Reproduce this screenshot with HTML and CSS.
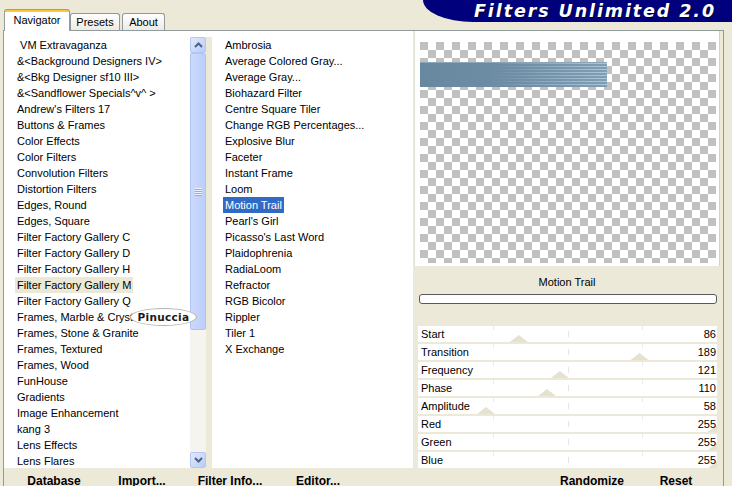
FILE: index.html
```html
<!DOCTYPE html>
<html>
<head>
<meta charset="utf-8">
<title>Filters Unlimited 2.0</title>
<link rel="stylesheet" href="styles.css">
</head>
<body>
<div class="window">
  <div class="header">
    <div class="tabs">
      <div class="tab active">Navigator</div>
      <div class="tab presets">Presets</div>
      <div class="tab about">About</div>
    </div>
    <div class="logo">Filters Unlimited 2.0</div>
  </div>
  <div class="panel">
    <div class="left">
      <div class="lists">
        <ul class="list list-cats">
          <li><span> VM Extravaganza</span></li>
          <li><span>&amp;&lt;Background Designers IV&gt;</span></li>
          <li><span>&amp;&lt;Bkg Designer sf10 III&gt;</span></li>
          <li><span>&amp;&lt;Sandflower Specials^v^ &gt;</span></li>
          <li><span>Andrew's Filters 17</span></li>
          <li><span>Buttons &amp; Frames</span></li>
          <li><span>Color Effects</span></li>
          <li><span>Color Filters</span></li>
          <li><span>Convolution Filters</span></li>
          <li><span>Distortion Filters</span></li>
          <li><span>Edges, Round</span></li>
          <li><span>Edges, Square</span></li>
          <li><span>Filter Factory Gallery C</span></li>
          <li><span>Filter Factory Gallery D</span></li>
          <li><span>Filter Factory Gallery H</span></li>
          <li class="sel-beige"><span>Filter Factory Gallery M</span></li>
          <li><span>Filter Factory Gallery Q</span></li>
          <li><span>Frames, Marble &amp; Crystal</span></li>
          <li><span>Frames, Stone &amp; Granite</span></li>
          <li><span>Frames, Textured</span></li>
          <li><span>Frames, Wood</span></li>
          <li><span>FunHouse</span></li>
          <li><span>Gradients</span></li>
          <li><span>Image Enhancement</span></li>
          <li><span>kang 3</span></li>
          <li><span>Lens Effects</span></li>
          <li><span>Lens Flares</span></li>
        </ul>
        <div class="scrollbar">
          <div class="sb-btn"><svg width="9" height="6" viewBox="0 0 9 6"><polyline points="1,5 4.5,1.5 8,5" fill="none" stroke="#4d6185" stroke-width="2"/></svg></div>
          <div class="sb-thumb"><span class="grip"></span></div>
          <div class="sb-track"></div>
          <div class="sb-btn"><svg width="9" height="6" viewBox="0 0 9 6"><polyline points="1,1 4.5,4.5 8,1" fill="none" stroke="#4d6185" stroke-width="2"/></svg></div>
        </div>
        <div class="sep"></div>
        <ul class="list list-filters">
          <li><span>Ambrosia</span></li>
          <li><span>Average Colored Gray...</span></li>
          <li><span>Average Gray...</span></li>
          <li><span>Biohazard Filter</span></li>
          <li><span>Centre Square Tiler</span></li>
          <li><span>Change RGB Percentages...</span></li>
          <li><span>Explosive Blur</span></li>
          <li><span>Faceter</span></li>
          <li><span>Instant Frame</span></li>
          <li><span>Loom</span></li>
          <li class="sel-blue"><span>Motion Trail</span></li>
          <li><span>Pearl's Girl</span></li>
          <li><span>Picasso's Last Word</span></li>
          <li><span>Plaidophrenia</span></li>
          <li><span>RadiaLoom</span></li>
          <li><span>Refractor</span></li>
          <li><span>RGB Bicolor</span></li>
          <li><span>Rippler</span></li>
          <li><span>Tiler 1</span></li>
          <li><span>X Exchange</span></li>
        </ul>
        <div class="badge">Pinuccia</div>
      </div>
      <div class="buttons">
        <div class="btn">Database</div>
        <div class="btn">Import...</div>
        <div class="btn">Filter Info...</div>
        <div class="btn">Editor...</div>
      </div>
    </div>
    <div class="right">
      <div class="preview">
        <div class="checker">
          <div class="trail"><div class="streaks"></div></div>
        </div>
      </div>
      <div class="title">Motion Trail</div>
      <div class="progress"></div>
      <div class="sliders">
        <div class="row"><span>Start</span><span>86</span><i class="thumb" style="left:100.8px"></i></div>
        <div class="row"><span>Transition</span><span>189</span><i class="thumb" style="left:221.6px"></i></div>
        <div class="row"><span>Frequency</span><span>121</span><i class="thumb" style="left:141.9px"></i></div>
        <div class="row"><span>Phase</span><span>110</span><i class="thumb" style="left:129px"></i></div>
        <div class="row"><span>Amplitude</span><span>58</span><i class="thumb" style="left:68px"></i></div>
        <div class="row"><span>Red</span><span>255</span><i class="thumb" style="left:299px"></i></div>
        <div class="row"><span>Green</span><span>255</span><i class="thumb" style="left:299px"></i></div>
        <div class="row"><span>Blue</span><span>255</span><i class="thumb" style="left:299px"></i></div>
      </div>
      <div class="rbtns">
        <div class="btn rbtn">Randomize</div>
        <div class="btn rbtn">Reset</div>
      </div>
    </div>
  </div>
</div>
</body>
</html>
```

FILE: styles.css
```css
html, body {
  margin: 0;
  padding: 0;
  background: #ece9d8;
}
body {
  font-family: "Liberation Sans", Arial, sans-serif;
  font-size: 11px;
  color: #000;
}
.window {
  width: 732px;
  height: 486px;
  overflow: hidden;
}

/* header */
.header {
  height: 30px;
  display: flex;
  align-items: flex-start;
}
.tabs {
  display: flex;
  align-items: flex-end;
  height: 30px;
  margin-left: 4px;
  position: relative;
  z-index: 2;
}
.tab {
  box-sizing: border-box;
  height: 17px;
  line-height: 16px;
  border: 1px solid #919b9c;
  border-bottom: none;
  border-radius: 3px 3px 0 0;
  background: linear-gradient(#ffffff, #ecebe5);
  text-align: center;
}
.tab.active {
  width: 66px;
  height: 22px;
  margin-bottom: -1px;
  line-height: 18px;
  padding-top: 1px;
  border-top-color: #e68b2c;
  background: linear-gradient(#ffc73c 0 2px, #ffffff 2px);
}
.tab.presets {
  width: 50px;
}
.tab.about {
  width: 43px;
  margin-left: 2px;
}
.logo {
  margin-left: auto;
  width: 309px;
  height: 22px;
  box-sizing: border-box;
  padding-right: 16px;
  background: #00007c;
  border-bottom-left-radius: 50px 22px;
  color: #fff;
  font-family: "DejaVu Sans", sans-serif;
  font-weight: bold;
  font-style: italic;
  font-size: 17.5px;
  letter-spacing: 1.9px;
  line-height: 22px;
  text-align: right;
  text-shadow: 1px 1px 0 #000030;
  white-space: nowrap;
}

/* panel */
.panel {
  margin-left: 3px;
  width: 721px;
  height: 456px;
  box-sizing: border-box;
  border: 1px solid #919b9c;
  border-bottom: none;
  background: #fff;
  display: flex;
}
.left {
  width: 409px;
  display: flex;
  flex-direction: column;
}
.lists {
  position: relative;
  height: 437px;
  box-sizing: border-box;
  padding: 6px 0 0 11px;
  display: flex;
}
.list {
  margin: 0;
  padding: 0;
  list-style: none;
  background: #fff;
}
.list li {
  height: 16px;
  line-height: 16px;
  white-space: pre;
}
.list li span {
  display: inline-block;
  padding: 0 2px;
}
.list-cats {
  width: 175px;
}
.list-filters {
  width: 190px;
  padding-left: 11px;
}
.sel-beige span {
  background: #ebe8d6;
}
.sel-blue span {
  background: #316ac5;
  color: #fff;
}

/* scrollbar */
.scrollbar {
  width: 16px;
  display: flex;
  flex-direction: column;
  background: #f5f4ef;
}
.sb-btn {
  height: 16px;
  box-sizing: border-box;
  border: 1px solid #b4c7f2;
  border-radius: 2px;
  background: linear-gradient(135deg, #e0e9fe, #b9cbf7);
  display: flex;
  align-items: center;
  justify-content: center;
}
.sb-thumb {
  height: 277px;
  box-sizing: border-box;
  border: 1px solid #afc3f2;
  border-radius: 2px;
  background: linear-gradient(to right, #cbd9fd, #bccffa);
  display: flex;
  align-items: center;
  justify-content: center;
}
.grip {
  width: 7px;
  height: 8px;
  background: repeating-linear-gradient(to bottom, #eef3fe 0 1px, #8eabea 1px 2px);
}
.sb-track {
  flex: 1;
}
.sep {
  width: 6px;
  background: #ece9d8;
}

.badge {
  position: absolute;
  left: 126px;
  top: 277px;
  width: 67px;
  height: 18px;
  box-sizing: border-box;
  border: 1px solid #b4b4b4;
  border-radius: 50%;
  background: #fff;
  font-family: "DejaVu Sans", sans-serif;
  font-weight: bold;
  font-size: 10.5px;
  letter-spacing: 0.3px;
  line-height: 16px;
  text-align: center;
  color: #1a1a1a;
}

/* bottom buttons */
.buttons {
  height: 18px;
  background: #ece9d8;
  display: flex;
  padding-left: 6px;
}
.btn {
  width: 88px;
  text-align: center;
  font-weight: bold;
  font-size: 12px;
  line-height: 14px;
  padding-top: 6px;
  white-space: nowrap;
}

/* right column */
.right {
  width: 310px;
  box-sizing: border-box;
  padding: 0 3px 0 1px;
  background: #ece9d8;
  display: flex;
  flex-direction: column;
}
.preview {
  background: #fff;
  padding: 11px 4px 3px 6px;
  border-left: 1px solid #e4e2d8;
  border-right: 1px solid #d6d3c6;
}
.checker {
  height: 221px;
  box-sizing: border-box;
  padding-top: 20px;
  margin-left: -1px;
  margin-right: -1px;
  background-image: conic-gradient(#fff 0 25%, #c0c0c0 0 50%, #fff 0 75%, #c0c0c0 0);
  background-size: 16px 16px;
}
.trail {
  width: 187px;
  height: 25px;
  background: linear-gradient(to right, #67889f, #6f8ea6 50%, #7f9db3);
  border-top: 1px solid #8aa6bb;
  box-sizing: border-box;
}
.streaks {
  height: 100%;
  background: repeating-linear-gradient(to bottom, rgba(190, 212, 228, 0.75) 0 1px, rgba(0, 0, 0, 0) 1px 3px);
  -webkit-mask-image: linear-gradient(to right, transparent 38%, #000 100%);
  mask-image: linear-gradient(to right, transparent 38%, #000 100%);
}
.title {
  text-align: center;
  padding-top: 9px;
  line-height: 14px;
}
.progress {
  margin: 5px 3px 0 5px;
  height: 10px;
  box-sizing: border-box;
  border: 1px solid #5a5a5a;
  border-radius: 3px;
  background: #fff;
}
.sliders {
  margin: 22px 3px 0 4px;
  display: flex;
  flex-direction: column;
  gap: 2px;
}
.row {
  position: relative;
  height: 16px;
  line-height: 16px;
  background-color: #fff;
  background-image:
    linear-gradient(#ececec, #ececec),
    linear-gradient(#e4e4e4, #e4e4e4),
    linear-gradient(#ececec, #ececec);
  background-size: 1px 4px, 1px 6px, 1px 4px;
  background-position: 75px 0, 150px 5px, 224px 0;
  background-repeat: no-repeat;
  display: flex;
  justify-content: space-between;
  padding: 0 1px 0 3px;
  overflow: hidden;
}
.row span {
  position: relative;
  z-index: 1;
}
.thumb {
  position: absolute;
  bottom: 0;
  width: 18px;
  height: 7px;
  margin-left: -9px;
  background: #e6e2cf;
  clip-path: polygon(50% 0, 100% 100%, 0 100%);
}
.rbtns {
  height: 18px;
  display: flex;
  justify-content: flex-end;
  margin-right: 2px;
}
.rbtn {
  width: 84px;
}
```
